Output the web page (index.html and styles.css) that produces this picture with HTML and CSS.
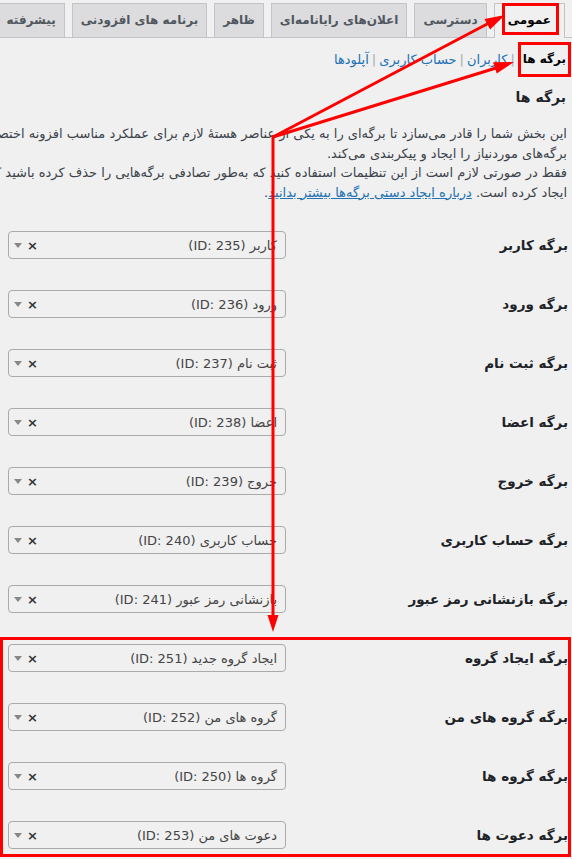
FILE: index.html
```html
<!DOCTYPE html>
<html lang="fa" dir="rtl">
<head>
<meta charset="utf-8">
<title>تنظیمات - برگه ها</title>
<link rel="stylesheet" href="styles.css">
</head>
<body>
<div class="wrap">
  <nav class="tabs">
    <a class="tab active">عمومی<span class="mark"></span></a>
    <a class="tab">دسترسی</a>
    <a class="tab">اعلان‌های رایانامه‌ای</a>
    <a class="tab">ظاهر</a>
    <a class="tab">برنامه های افزودنی</a>
    <a class="tab">پیشرفته</a>
    <a class="tab">ویرایش</a>
  </nav>

  <div class="subnav">
    <span class="current">برگه ها</span>
    <span class="sep">|</span>
    <a class="sublink">کاربران</a>
    <span class="sep">|</span>
    <a class="sublink">حساب کاربری</a>
    <span class="sep">|</span>
    <a class="sublink">آپلودها</a>
  </div>

  <h2 class="title">برگه ها</h2>

  <p class="desc">این بخش شما را قادر می‌سازد تا برگه‌ای را به یکی از عناصر هستهٔ لازم برای عملکرد مناسب افزونه اختصاص دهید. افزونه به‌طور خودکار همه<br>برگه‌های موردنیاز را ایجاد و پیکربندی می‌کند.<br>فقط در صورتی لازم است از این تنظیمات استفاده کنید که به‌طور تصادفی برگه‌هایی را حذف کرده باشید که افزونه به‌طور خودکار<br>ایجاد کرده است. <a class="inline-link">درباره ایجاد دستی برگه‌ها بیشتر بدانید</a>.</p>

  <div class="form">
    <div class="row"><label class="label">برگه کاربر</label><div class="select"><span class="val">کاربر (ID: 235)</span><span class="clear">×</span><span class="caret"></span></div></div>
    <div class="row"><label class="label">برگه ورود</label><div class="select"><span class="val">ورود (ID: 236)</span><span class="clear">×</span><span class="caret"></span></div></div>
    <div class="row"><label class="label">برگه ثبت نام</label><div class="select"><span class="val">ثبت نام (ID: 237)</span><span class="clear">×</span><span class="caret"></span></div></div>
    <div class="row"><label class="label">برگه اعضا</label><div class="select"><span class="val">اعضا (ID: 238)</span><span class="clear">×</span><span class="caret"></span></div></div>
    <div class="row"><label class="label">برگه خروج</label><div class="select"><span class="val">خروج (ID: 239)</span><span class="clear">×</span><span class="caret"></span></div></div>
    <div class="row"><label class="label">برگه حساب کاربری</label><div class="select"><span class="val">حساب کاربری (ID: 240)</span><span class="clear">×</span><span class="caret"></span></div></div>
    <div class="row"><label class="label">برگه بازنشانی رمز عبور</label><div class="select"><span class="val">بازنشانی رمز عبور (ID: 241)</span><span class="clear">×</span><span class="caret"></span></div></div>
    <div class="group">
      <div class="row"><label class="label">برگه ایجاد گروه</label><div class="select"><span class="val">ایجاد گروه جدید (ID: 251)</span><span class="clear">×</span><span class="caret"></span></div></div>
      <div class="row"><label class="label">برگه گروه های من</label><div class="select"><span class="val">گروه های من (ID: 252)</span><span class="clear">×</span><span class="caret"></span></div></div>
      <div class="row"><label class="label">برگه گروه ها</label><div class="select"><span class="val">گروه ها (ID: 250)</span><span class="clear">×</span><span class="caret"></span></div></div>
      <div class="row"><label class="label">برگه دعوت ها</label><div class="select"><span class="val">دعوت های من (ID: 253)</span><span class="clear">×</span><span class="caret"></span></div></div>
    </div>
  </div>
</div>

<svg class="arrows" width="572" height="859" viewBox="0 0 572 859" aria-hidden="true">
  <g stroke="#ff0000" stroke-width="3" fill="none" stroke-linecap="butt">
    <line x1="273" y1="137" x2="489" y2="23"/>
    <line x1="273" y1="137" x2="496" y2="68"/>
    <line x1="273" y1="136" x2="273" y2="618"/>
  </g>
  <g fill="#ff0000">
    <polygon points="505,15 490.1,29.6 484.5,19"/>
    <polygon points="514,62 496.7,73.6 493.1,62.2"/>
    <polygon points="273,632 267.5,615 278.5,615"/>
  </g>
</svg>
</body>
</html>
```

FILE: styles.css
```css
html, body {
  margin: 0;
  padding: 0;
}

body {
  position: relative;
  width: 572px;
  height: 859px;
  overflow: hidden;
  background: #f0f0f1;
  direction: rtl;
  font-family: "DejaVu Sans", sans-serif;
  font-size: 13px;
  color: #3c434a;
}

.wrap {
  width: 572px;
}

/* Tabs */
.tabs {
  display: flex;
  gap: 7px;
  height: 34px;
  padding: 3px 7px 0 0;
  border-bottom: 1px solid #c3c4c7;
  white-space: nowrap;
}

.tab {
  flex-shrink: 0;
  position: relative;
  box-sizing: border-box;
  height: 34px;
  padding: 0 8px;
  border: 1px solid #c3c4c7;
  border-bottom: none;
  background: #dcdcde;
  color: #50575e;
  font-size: 12px;
  font-weight: bold;
  line-height: 32px;
  text-align: center;
}

.tab.active {
  height: 35px;
  padding: 0 13px;
  background: #f0f0f1;
  color: #000;
}

.mark {
  position: absolute;
  top: -1px;
  left: 7px;
  right: 5px;
  height: 32px;
  box-sizing: border-box;
  border: 3px solid #ff0000;
}

/* Sub navigation */
.subnav {
  display: flex;
  align-items: center;
  height: 35px;
  margin-top: 4px;
  padding-right: 1px;
  font-size: 13px;
}

.current {
  box-sizing: border-box;
  height: 35px;
  padding: 0 2px;
  border: 3px solid #ff0000;
  color: #000;
  font-size: 12px;
  font-weight: bold;
  line-height: 29px;
}

.sep {
  margin: 0 3px;
  color: #a7aaad;
}

.sublink {
  color: #2271b1;
}

/* Heading and description */
.title {
  margin: 9px 6px 0 0;
  font-size: 14px;
  line-height: 22px;
  color: #1d2327;
}

.desc {
  margin: 16px 5px 0 0;
  line-height: 19.5px;
  white-space: nowrap;
  color: #3c434a;
}

.inline-link {
  color: #2271b1;
  text-decoration: underline;
}

/* Form */
.form {
  display: flex;
  flex-direction: column;
  gap: 31px;
  margin-top: 29px;
}

.row {
  display: flex;
  align-items: center;
  height: 28px;
  padding: 0 4px 0 8px;
}

.label {
  flex: 1;
  font-size: 13.5px;
  font-weight: bold;
  color: #1d2327;
}

.select {
  display: flex;
  align-items: center;
  box-sizing: border-box;
  width: 278px;
  height: 28px;
  padding: 0 8px 0 5px;
  border: 1px solid #aaaaaa;
  border-radius: 4px;
  background: #f0f0f1;
}

.val {
  flex: 1;
  color: #444;
  font-size: 13px;
  white-space: nowrap;
}

.clear {
  margin-left: 5px;
  color: #333;
  font-size: 13px;
  font-weight: bold;
  line-height: 1;
}

.caret {
  width: 0;
  height: 0;
  border-top: 5px solid #888;
  border-left: 4px solid transparent;
  border-right: 4px solid transparent;
}

.group {
  display: flex;
  flex-direction: column;
  gap: 31px;
  margin: -7px 1px 0 0;
  padding: 4px 0 5px;
  border: 3px solid #ff0000;
}

.group .row {
  padding: 0 0 0 5px;
}

/* Annotation arrows */
.arrows {
  position: absolute;
  top: 0;
  left: 0;
  pointer-events: none;
}
```
